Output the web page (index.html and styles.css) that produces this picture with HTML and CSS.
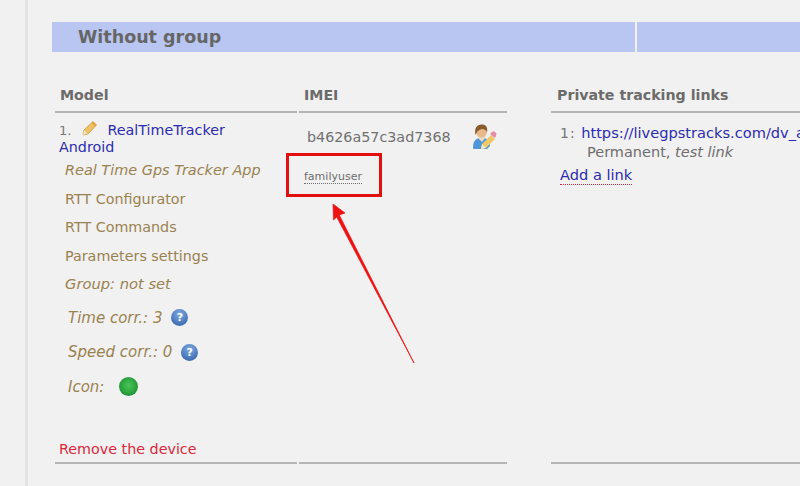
FILE: index.html
```html
<!DOCTYPE html>
<html lang="en">
<head>
  <meta charset="UTF-8" />
  <meta name="viewport" content="width=device-width, initial-scale=1" />
  <title>Devices</title>
  <link rel="stylesheet" href="styles.css">
</head>
<body>

  <div class="content">
    <div class="group-bar">
      <h2 class="group-title">Without group</h2>
      <div class="group-fill"></div>
    </div>

    <div class="devices">
      <!-- Model -->
      <div class="col col-model">
        <div class="col-head">Model</div>
        <div class="col-body">
          <div class="model-name">
            <div>
              <span class="num">1.</span>
              <svg class="pencil" width="16" height="16" viewBox="0 0 16 16">
                <path d="M1 15l1-5L11 1.500l3.500 3.500L6 14z" fill="#eec166" stroke="#c99a3c" stroke-width="0.8"/>
                <path d="M11 1.500l3.500 3.500-1.500 1.500L9.500 3z" fill="#e8a23c"/>
                <path d="M1 15l1-5 3.500 3.500z" fill="#f3e3c0"/>
              </svg>
              <a href="#" class="link">RealTimeTracker</a>
            </div>
            <a href="#" class="link">Android</a>
          </div>
          <div class="item item-app"><em>Real Time Gps Tracker App</em></div>
          <div class="item">RTT Configurator</div>
          <div class="item">RTT Commands</div>
          <div class="item">Parameters settings</div>
          <div class="item item-group"><em>Group: not set</em></div>
          <div class="item item-corr item-time">
            <em>Time corr.: 3</em>
            <span class="help">?</span>
          </div>
          <div class="item item-corr">
            <em>Speed corr.: 0</em>
            <span class="help">?</span>
          </div>
          <div class="item item-corr item-icon">
            <em>Icon:</em>
            <span class="dot"></span>
          </div>
          <div class="remove"><a href="#">Remove the device</a></div>
        </div>
      </div>

      <!-- IMEI -->
      <div class="col col-imei">
        <div class="col-head">IMEI</div>
        <div class="col-body">
          <div class="imei-row">
            <span class="imei">b4626a57c3ad7368</span>
            <svg class="user-edit" width="26" height="26" viewBox="0 0 26 26">
              <path d="M2 24c0-6 2-9 6-10h5c4 1 6 4 6 8l-3 3H4c-1 0-2 0-2-1z" fill="#4d97d8"/>
              <path d="M7 14l4 4 3-4-1-3H8z" fill="#f0d9c0"/>
              <circle cx="10.500" cy="8" r="5.500" fill="#e8b98c"/>
              <path d="M4.500 11C3 4 6 .5 10.500 .5S17 3 16 8c-1-2-3-3-5-3-2 1-4 1-5 3z" fill="#8a5a2b"/>
              <path d="M10 25l1-5 9-9 4 4-9 9z" fill="#f0c867"/>
              <path d="M10 25l1-5 4 4z" fill="#f6e7c8"/>
              <path d="M19 10l2-2c1-1 2-1 3 0l1 1c1 1 0 2 0 3l-1 2z" fill="#e58ca6"/>
            </svg>
          </div>
          <a href="#" class="user-link">familyuser</a>
        </div>
      </div>

      <!-- Links -->
      <div class="col col-links">
        <div class="col-head">Private tracking links</div>
        <div class="col-body">
          <div class="track-row">
            <span class="num">1:</span>
            <a href="#" class="link track-link">https://livegpstracks.com/dv_a</a>
          </div>
          <div class="track-note">Permanent, <em>test link</em></div>
          <a href="#" class="add-link">Add a link</a>
        </div>
      </div>
    </div>
  </div>

  <!-- Annotation drawn on top of the page -->
  <div class="mark-box"></div>
  <svg class="mark-arrow" width="100" height="170" viewBox="0 0 100 170">
    <path d="M2 1L2.500 17L5.700 14L83 160L8.300 12L14 10z" fill="#ee1111" stroke="#ee1111" stroke-width="0.700" stroke-linejoin="round"/>
  </svg>

</body>
</html>
```

FILE: styles.css
```css
html, body {
  margin: 0;
  height: 100%;
  overflow: hidden;
}
body {
  font-family: "DejaVu Sans", Verdana, sans-serif;
  font-size: 14.300px;
  background: #f1f1f1;
  color: #6e6e6e;
  padding-left: 25px;
  position: relative;
}
.content {
  border-left: 3px solid #e3e3e3;
  padding: 22px 0 0 24px;
  height: 464px;
  overflow: hidden;
}

/* Group bar */
.group-bar {
  display: flex;
  height: 30px;
  gap: 2px;
}
.group-title {
  margin: 0;
  width: 583px;
  padding-left: 26px;
  box-sizing: border-box;
  background: #b9c6f2;
  font-size: 17.500px;
  line-height: 30px;
  color: #666;
}
.group-fill {
  flex: 1;
  background: #b9c6f2;
}

/* Columns */
.devices {
  display: flex;
  margin-top: 30px;
  margin-left: 3px;
}
.col {
  height: 380px;
  border-bottom: 2px solid #b5b5b5;
  flex: none;
}
.col-model {
  width: 242px;
  margin-right: 2px;
}
.col-imei {
  width: 208px;
  margin-right: 44px;
}
.col-links {
  width: 249px;
  overflow: hidden;
}
.col-head {
  height: 31px;
  padding-left: 5px;
  box-sizing: border-box;
  border-bottom: 2px solid #b5b5b5;
  font-weight: bold;
  font-size: 14.200px;
  line-height: 27px;
  color: #6b6b6b;
}
.col-links .col-head {
  padding-left: 6px;
}

/* Model column */
.model-name {
  width: 190px;
  padding: 7px 0 0 4px;
  line-height: 17px;
}
.num {
  font-size: 13px;
  color: #777;
}
.pencil {
  vertical-align: -1px;
  margin: 0 5px 0 6px;
}
.link {
  color: #2c2cb0;
  text-decoration: none;
}
.item {
  height: 28.500px;
  line-height: 28.500px;
  padding-left: 10px;
  color: #9a8250;
}
.item-app {
  font-size: 14.450px;
}
.item-group {
  font-size: 14.700px;
}
.item-corr {
  display: flex;
  align-items: center;
  gap: 9px;
  height: 34.500px;
  line-height: 34.500px;
  padding-left: 13px;
  font-size: 15px;
}
.item-time {
  margin-top: 2px;
}
.help {
  width: 17px;
  height: 17px;
  border-radius: 50%;
  background: radial-gradient(circle at 50% 30%, #7fabe2, #2a5aa4);
  color: #fff;
  font-size: 11px;
  font-weight: bold;
  line-height: 17px;
  text-align: center;
}
.item-icon {
  gap: 15px;
}
.dot {
  width: 19px;
  height: 19px;
  border-radius: 50%;
  background: radial-gradient(circle at 50% 45%, #4cc659 0, #2aa33f 55%, #0f7527 100%);
}
.remove {
  margin-top: 37px;
  padding-left: 4px;
  line-height: 17px;
}
.remove a {
  color: #d8283c;
  text-decoration: none;
}

/* IMEI column */
.imei-row {
  display: flex;
  align-items: center;
  padding: 11px 0 0 8px;
  height: 26px;
}
.imei {
  font-size: 14.300px;
  color: #707070;
}
.user-edit {
  margin-left: 20px;
}
.user-link {
  display: inline-block;
  margin: 21px 0 0 5px;
  font-size: 11px;
  color: #6e6e6e;
  text-decoration: none;
  border-bottom: 1px dotted #6e6e6e;
  line-height: 12px;
}

/* Links column */
.track-row {
  padding: 10px 0 0 9px;
  line-height: 19px;
  white-space: nowrap;
}
.track-row .num {
  font-size: 14px;
  letter-spacing: 1px;
}
.track-link {
  font-size: 14.600px;
  margin-left: 1px;
}
.track-note {
  padding-left: 36px;
  line-height: 19px;
  font-size: 14.500px;
  color: #6e6e6e;
}
.add-link {
  display: inline-block;
  margin: 4px 0 0 9px;
  padding-bottom: 1px;
  line-height: 17px;
  font-size: 14.600px;
  color: #2c2cb0;
  text-decoration: none;
  border-bottom: 1px dotted #d8283c;
}

/* Annotation */
.mark-box {
  position: absolute;
  left: 286px;
  top: 153px;
  width: 96px;
  height: 44px;
  box-sizing: border-box;
  border: 3px solid #e30f0f;
}
.mark-arrow {
  position: absolute;
  left: 331px;
  top: 203px;
}
```
